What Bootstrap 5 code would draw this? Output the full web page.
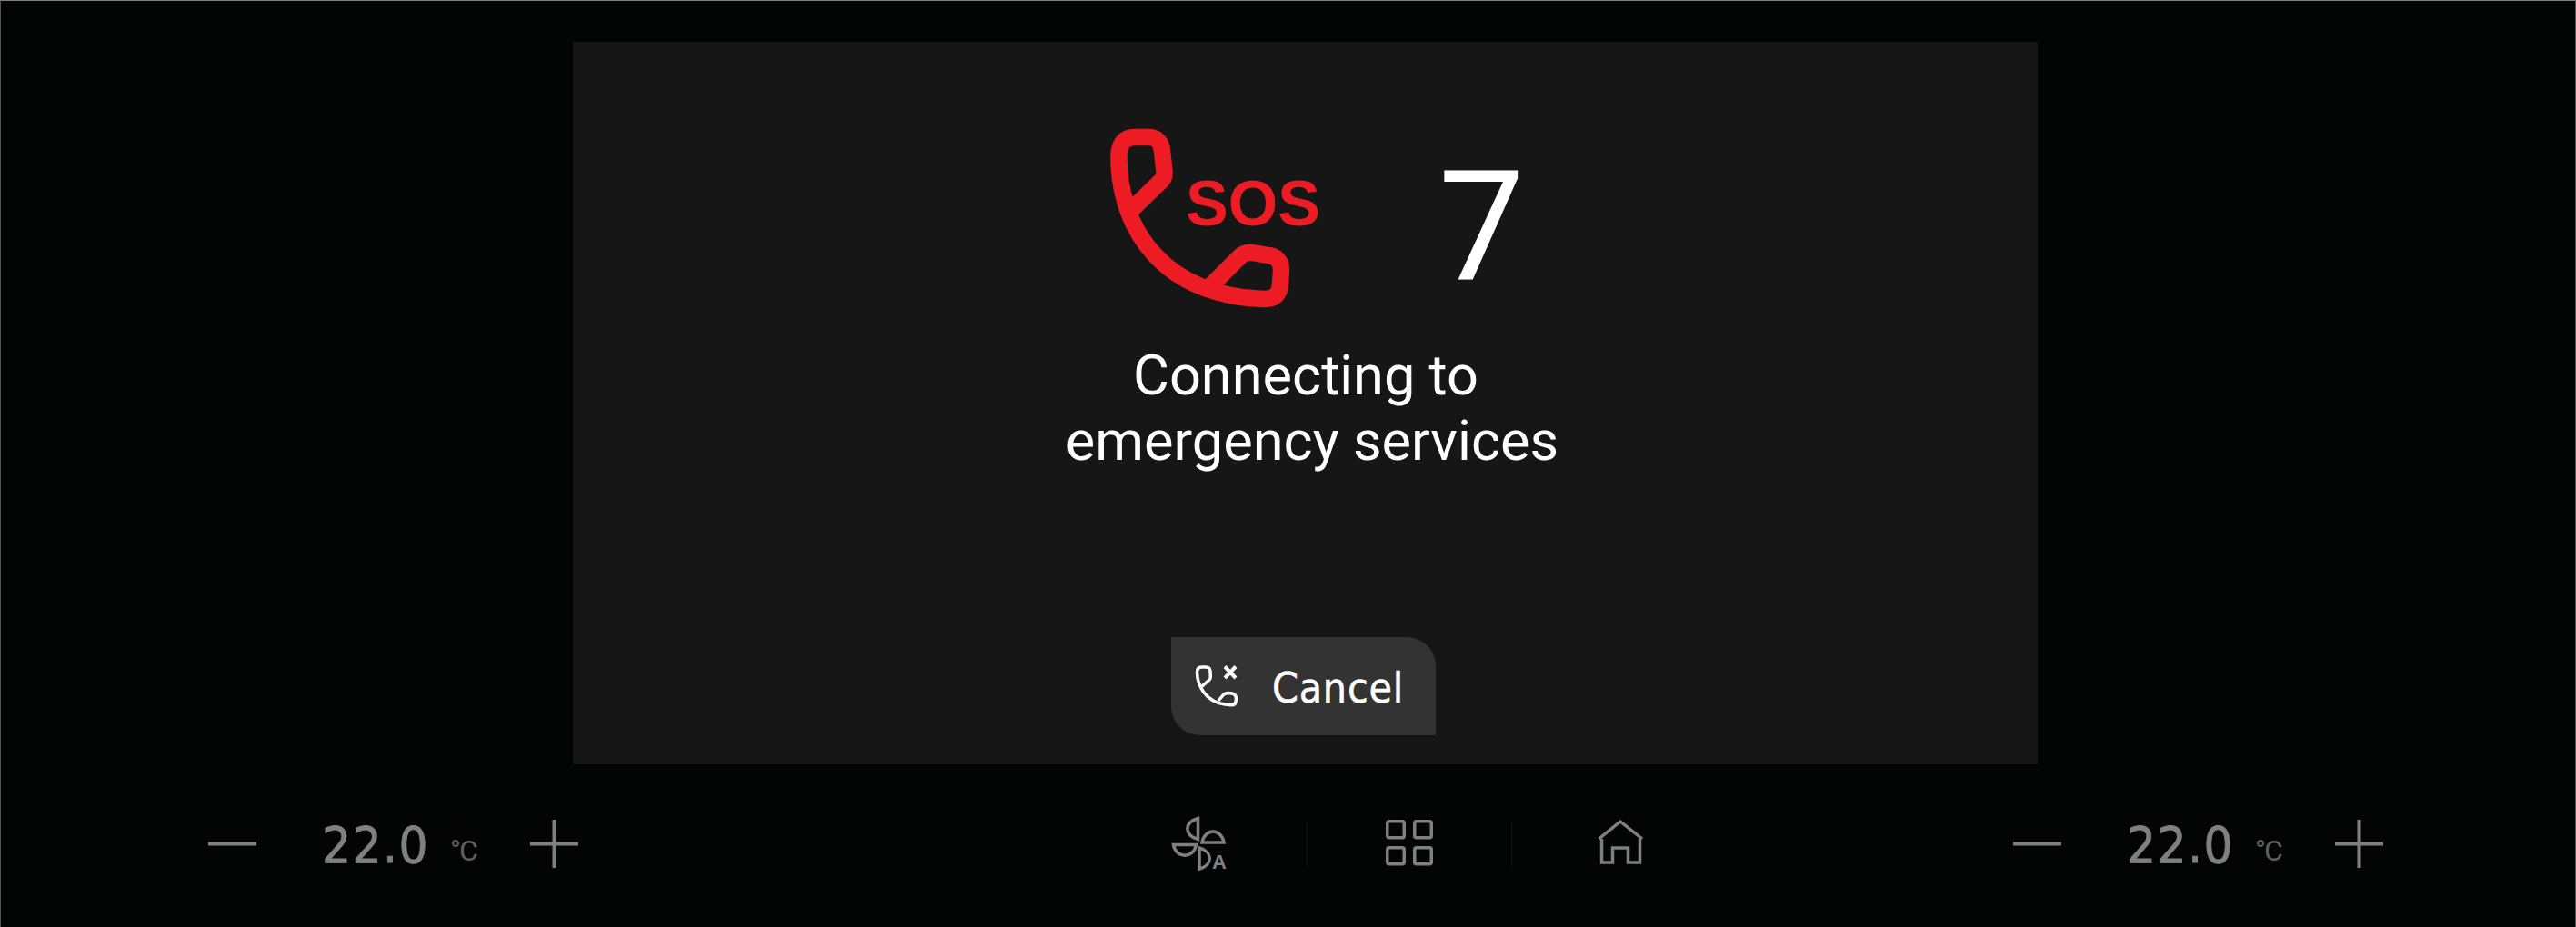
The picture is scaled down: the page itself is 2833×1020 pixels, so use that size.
<!DOCTYPE html>
<html lang="en">
<head>
<meta charset="utf-8">
<title>SOS</title>
<link href="https://cdn.jsdelivr.net/npm/bootstrap@5.3.0/dist/css/bootstrap.min.css" rel="stylesheet">
<style>
html,body{margin:0;background:#030505;}
.frame{width:2833px;height:1020px;background:#030505;border-top:1px solid #808080;border-left:1px solid #555;border-right:1px solid #555;padding-top:45px;overflow:hidden;font-family:Roboto,"Liberation Sans",sans-serif;}
.screen{width:1611px;height:795px;margin-left:629px;background:#161616;padding:90px 0 32px 15px;color:#fff;}
.sos-row{height:210px;}
.sos-icon{width:240px;height:210px;flex:none;}
.sos-label{font-family:"Liberation Sans",sans-serif;font-weight:700;font-size:70px;fill:#ed1c24;}
.count{font-weight:400;font-size:168px;line-height:210px;margin:10px 0 0 127px;width:89px;}
.msg{font-size:61.3px;line-height:72px;margin-top:31px;text-align:center;}
.msg-first{padding-right:14px;}
.cancel-btn{width:291px;height:108px;margin-top:auto;margin-right:19px;padding:0 0 0 22px;background:#333;color:#fff;border:0;border-radius:0 32px 0 32px;font-family:"DejaVu Sans Condensed","DejaVu Sans",sans-serif;font-size:46px;line-height:1;gap:33px;letter-spacing:.8px;-webkit-text-stroke:.5px #fff;}
.cancel-btn:hover{background:#333;color:#fff;}
.cancel-btn span{padding-top:4px;}
.cancel-icon{width:56px;height:56px;flex:none;}
.bar{height:179px;padding:0 211px 5px 228px;color:#808080;}
.temp-group{width:407px;}
.temp-box{width:301px;padding:4px 0 0 72px;}
.temp-val{font-family:"DejaVu Sans Condensed","DejaVu Sans",sans-serif;font-size:56px;line-height:1;width:141px;letter-spacing:1.5px;-webkit-text-stroke:.8px #808080;}
.temp-unit{font-size:32px;line-height:1;color:#5f5f5f;letter-spacing:-2px;position:relative;top:-2px;}
.step-icon{width:53px;height:53px;flex:none;}
.center-group{margin-left:652px;}
.fan-icon{width:66px;height:70px;flex:none;}
.fan-a{font-family:"Liberation Sans",sans-serif;font-size:22px;font-weight:700;fill:#808080;}
.tile-icon{width:52px;height:52px;flex:none;}
.sep{width:1px;height:51px;background:#111;}
.sep-a{margin:0 86px 0 83px;}
.sep-b{margin:0 94px 0 86px;}
</style>
</head>
<body>
<div class="frame">
  <main class="screen d-flex flex-column align-items-center">
    <div class="sos-row d-flex align-items-start">
      <svg class="sos-icon" viewBox="0 -1 240 210" fill="none" aria-label="SOS call">
        <path d="M24 99 L62 62 Q66 58 65.5 52 L63 29 Q61.5 14 48 14 L33 14 Q15.4 14 15.4 36 C15.4 100 50 176 150 190 C160 191 170 192 176 192 Q192 192 193 176 L194 160 Q194 146 180 144 L162 141 Q154 140 148 146 L113 181" stroke="#ed1c24" stroke-width="18.5" stroke-linejoin="round"/>
        <text class="sos-label" x="89" y="111">SOS</text>
      </svg>
      <div class="count">7</div>
    </div>
    <div class="msg">
      <div class="msg-first">Connecting to</div>
      <div>emergency services</div>
    </div>
    <button type="button" class="btn cancel-btn d-flex align-items-center">
      <svg class="cancel-icon" viewBox="0 0 56 56" fill="none" stroke="#fff" aria-hidden="true">
        <path d="M11 29 L20 21 Q21.5 19.5 21.3 17 L21 11.5 Q20.6 7 16 7 H11.5 Q6.5 7 6.5 12.5 C6.5 26 15 45 37 48 L44 48.7 Q48.5 49 49 45 L49.5 42 Q49.5 37 45 36 L41 35.5 Q37 35.5 35 38 L30 44" stroke-width="3.5" stroke-linejoin="round"/>
        <path d="M37 6.5 L49 19 M49 6.5 L37 19" stroke-width="4"/>
      </svg>
      <span>Cancel</span>
    </button>
  </main>
  <footer class="bar d-flex align-items-center">
    <div class="temp-group d-flex align-items-center">
      <svg class="step-icon" viewBox="0 0 53 53" fill="none" stroke="#808080" stroke-width="4" aria-hidden="true"><path d="M0 26.5 H53"/></svg>
      <div class="temp-box d-flex align-items-baseline"><span class="temp-val">22.0</span><span class="temp-unit">°C</span></div>
      <svg class="step-icon" viewBox="0 0 53 53" fill="none" stroke="#808080" stroke-width="4" aria-hidden="true"><path d="M0 26.5 H53 M26.5 0 V53"/></svg>
    </div>
    <div class="center-group d-flex align-items-center">
      <svg class="fan-icon" viewBox="0 -4 66 70" fill="none" stroke="#808080" stroke-width="3.5" aria-hidden="true">
        <path d="M29.5 3.5 V26.5 C14 22 14 8 29.5 3.5 Z"/>
        <path d="M34 30 H58 C55 14 37 14 34 30 Z"/>
        <path d="M2.5 32.5 H27.5 C25 48 5 48 2.5 32.5 Z"/>
        <path d="M31 36 V59 C46 55 46 40 31 36 Z"/>
        <text class="fan-a" x="45" y="59" stroke="none">A</text>
      </svg>
      <span class="sep sep-a"></span>
      <svg class="tile-icon" viewBox="0 0 52 52" fill="none" stroke="#808080" stroke-width="3.5" aria-hidden="true">
        <rect x="1.75" y="1.75" width="18.5" height="18" rx="2"/>
        <rect x="31.75" y="1.75" width="18.5" height="18" rx="2"/>
        <rect x="1.75" y="30.75" width="18.5" height="18" rx="2"/>
        <rect x="31.75" y="30.75" width="18.5" height="18" rx="2"/>
      </svg>
      <span class="sep sep-b"></span>
      <svg class="tile-icon" viewBox="0 0 52 52" fill="none" stroke="#808080" stroke-width="3.5" aria-hidden="true">
        <path d="M1.5 21 L25 2 L49 21 M4.5 21 V47 H16.5 V31 H33.5 V47 H46.5 V21"/>
      </svg>
    </div>
    <div class="temp-group d-flex align-items-center ms-auto">
      <svg class="step-icon" viewBox="0 0 53 53" fill="none" stroke="#808080" stroke-width="4" aria-hidden="true"><path d="M0 26.5 H53"/></svg>
      <div class="temp-box d-flex align-items-baseline"><span class="temp-val">22.0</span><span class="temp-unit">°C</span></div>
      <svg class="step-icon" viewBox="0 0 53 53" fill="none" stroke="#808080" stroke-width="4" aria-hidden="true"><path d="M0 26.5 H53 M26.5 0 V53"/></svg>
    </div>
  </footer>
</div>
<script src="https://cdn.jsdelivr.net/npm/bootstrap@5.3.0/dist/js/bootstrap.bundle.min.js"></script>
</body>
</html>
